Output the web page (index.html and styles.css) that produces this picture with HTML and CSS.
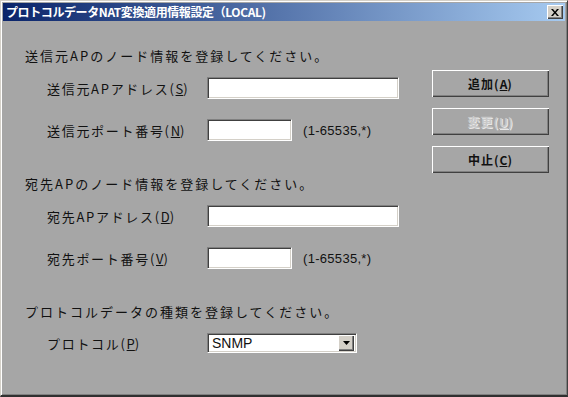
FILE: index.html
```html
<!DOCTYPE html>
<html lang="ja">
<head>
  <meta charset="UTF-8">
  <title>プロトコルデータNAT変換適用情報設定</title>
  <link rel="stylesheet" href="styles.css">
</head>
<body>
  <div class="window">
    <div class="titlebar">
      <span class="title">プロトコルデータNAT変換適用情報設定（LOCAL)</span>
      <button class="close-btn" aria-label="閉じる">
        <svg width="8" height="7" viewBox="0 0 8 7">
          <path d="M0 0h2l2 2.5L6 0h2L5 3.5 8 7H6L4 4.5 2 7H0l3-3.5z" fill="#000"/>
        </svg>
      </button>
    </div>

    <div class="client">
      <div class="form">
        <div class="section">
          <div class="heading">送信元APのノード情報を登録してください。</div>
          <div class="row first">
            <label class="label">送信元APアドレス(<u>S</u>)</label>
            <div class="field wide"></div>
          </div>
          <div class="row">
            <label class="label">送信元ポート番号(<u>N</u>)</label>
            <div class="field narrow"></div>
            <span class="hint">(1-65535,*)</span>
          </div>
        </div>

        <div class="section">
          <div class="heading">宛先APのノード情報を登録してください。</div>
          <div class="row first">
            <label class="label">宛先APアドレス(<u>D</u>)</label>
            <div class="field wide"></div>
          </div>
          <div class="row">
            <label class="label">宛先ポート番号(<u>V</u>)</label>
            <div class="field narrow"></div>
            <span class="hint">(1-65535,*)</span>
          </div>
        </div>

        <div class="section">
          <div class="heading">プロトコルデータの種類を登録してください。</div>
          <div class="row first">
            <label class="label">プロトコル(<u>P</u>)</label>
            <div class="select">
              <span class="select-value">SNMP</span>
              <span class="select-arrow">
                <svg width="7" height="4" viewBox="0 0 7 4"><path d="M0 0h7L3.5 4z" fill="#000"/></svg>
              </span>
            </div>
          </div>
        </div>
      </div>

      <div class="buttons">
        <button class="btn">追加(<u>A</u>)</button>
        <button class="btn disabled">変更(<u>U</u>)</button>
        <button class="btn">中止(<u>C</u>)</button>
      </div>
    </div>
  </div>
</body>
</html>
```

FILE: styles.css
```css
body {
  margin: 0;
  padding: 0;
  font-family: "Noto Sans CJK JP", "Liberation Sans", sans-serif;
  color: #111;
}

.window {
  width: 568px;
  height: 397px;
  box-sizing: border-box;
  background: #a6a6a6;
  border-top: 1px solid #d4d0c8;
  border-left: 1px solid #d4d0c8;
  border-right: 1px solid #404040;
  border-bottom: 2px solid #303030;
  box-shadow: inset 1px 1px 0 #fff, inset -1px -1px 0 #808080;
  padding: 2px;
  display: flex;
  flex-direction: column;
}

/* Title bar */
.titlebar {
  height: 18px;
  display: flex;
  align-items: center;
  justify-content: space-between;
  padding: 0 2px 0 3px;
  background: linear-gradient(to right, #0a246a, #a6caf0);
}

.title {
  color: #fff;
  font-size: 12px;
  font-weight: bold;
  letter-spacing: -0.4px;
  line-height: 18px;
}

.close-btn {
  width: 16px;
  height: 14px;
  padding: 0;
  background: #d4d0c8;
  border: none;
  box-shadow: inset 1px 1px 0 #fff, inset -1px -1px 0 #404040, inset -2px -2px 0 #808080;
  display: flex;
  align-items: center;
  justify-content: center;
}

/* Client area */
.client {
  flex: 1;
  display: flex;
  padding: 26px 16px 0 22px;
}

.form {
  flex: 1;
}

.section + .section {
  margin-top: 34px;
}

.heading {
  font-size: 13px;
  line-height: 18px;
  letter-spacing: 2px;
}

.row {
  display: flex;
  align-items: center;
  margin-top: 20px;
  padding-left: 22px;
}

.row.first {
  margin-top: 12px;
}

.label {
  width: 160px;
  font-size: 13px;
  letter-spacing: 1.7px;
}

.label u,
.btn u {
  letter-spacing: 0;
}

.field {
  height: 22px;
  box-sizing: border-box;
  background: #fff;
  border-top: 1px solid #808080;
  border-left: 1px solid #808080;
  border-right: 1px solid #fff;
  border-bottom: 1px solid #fff;
  box-shadow: inset 1px 1px 0 #404040, inset -1px -1px 0 #d4d0c8;
}

.field.wide {
  width: 192px;
}

.field.narrow {
  width: 85px;
}

.hint {
  margin-left: 11px;
  font-family: "Liberation Sans", sans-serif;
  font-size: 13px;
  letter-spacing: 0.3px;
}

.select {
  width: 150px;
  height: 20px;
  box-sizing: border-box;
  background: #fff;
  border-top: 1px solid #808080;
  border-left: 1px solid #808080;
  border-right: 1px solid #fff;
  border-bottom: 1px solid #fff;
  box-shadow: inset 1px 1px 0 #404040, inset -1px -1px 0 #d4d0c8;
  display: flex;
  align-items: center;
  padding: 2px;
}

.select-value {
  flex: 1;
  font-family: "Liberation Sans", sans-serif;
  font-size: 14px;
  padding-left: 2px;
}

.select-arrow {
  width: 16px;
  height: 16px;
  box-sizing: border-box;
  background: #d4d0c8;
  box-shadow: inset 1px 1px 0 #fff, inset -1px -1px 0 #404040, inset -2px -2px 0 #808080;
  display: flex;
  align-items: center;
  justify-content: center;
}

/* Buttons */
.buttons {
  display: flex;
  flex-direction: column;
  gap: 11px;
  padding-top: 23px;
}

.btn {
  width: 117px;
  height: 27px;
  background: #a6a6a6;
  border: none;
  box-shadow: inset 1px 1px 0 #fff, inset -1px -1px 0 #404040, inset -2px -2px 0 #808080;
  font-family: "Noto Sans CJK JP", "Liberation Sans", sans-serif;
  font-size: 12px;
  font-weight: bold;
  color: #111;
  letter-spacing: 1px;
  padding: 0;
}

.btn.disabled {
  color: #c8c8c8;
  text-shadow: 1px 1px 0 #e8e8e8;
}
```
